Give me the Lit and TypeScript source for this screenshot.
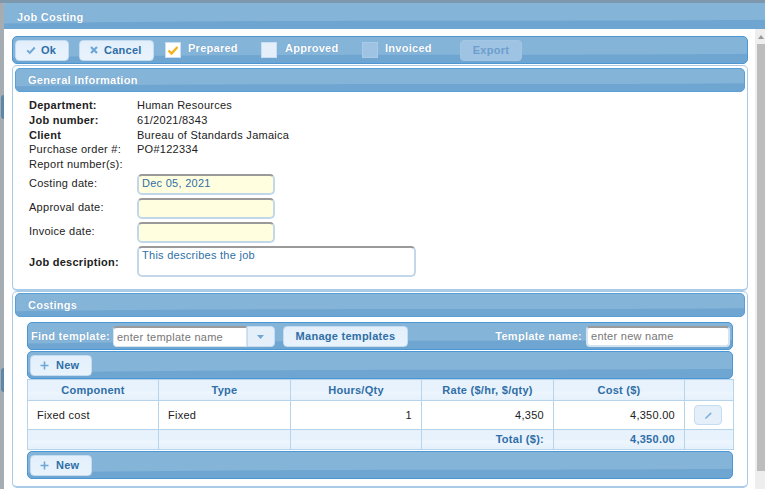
import { LitElement, html, css } from "lit";
import { customElement } from "lit/decorators.js";

const check = (c: string, w = 10) => html`<svg width=${w} height=${w} viewBox="0 0 12 12"><path d="M1.5 6.5 L4.5 9.5 L10.5 3" fill="none" stroke=${c} stroke-width="2.4"/></svg>`;
const cross = html`<svg width="8" height="8" viewBox="0 0 8 8"><path d="M1 1 L7 7 M7 1 L1 7" stroke="#6ea6d6" stroke-width="2.2"/></svg>`;
const plus = html`<svg width="9" height="9" viewBox="0 0 9 9"><path d="M4.5 0.5 V8.5 M0.5 4.5 H8.5" stroke="#6ea6d6" stroke-width="1.6"/></svg>`;
const caret = html`<svg width="9" height="6" viewBox="0 0 9 6"><path d="M1 1 H8 L4.5 5 Z" fill="#6ea6d6"/></svg>`;
const pencil = html`<svg width="11" height="11" viewBox="0 0 11 11"><path d="M2 9 L2.4 7.4 L7.6 2.2 L8.8 3.4 L3.6 8.6 Z" fill="#7fb3de"/></svg>`;

@customElement("app-root")
export class AppRoot extends LitElement {
  static styles = css`
    :host { display: block; width: 765px; height: 489px; overflow: hidden; position: relative;
      font: 11px/15px "Liberation Sans", Arial, sans-serif; color: #222; letter-spacing: 0.27px;
      background: #a8a8a8; }
    * { box-sizing: border-box; }
    .page { display: flex; height: 489px; padding-top: 3px;
      background: linear-gradient(#7d97ad 0, #7d97ad 3px, #a6adb2 3px, #a6adb2 100%); }
    .strip { width: 4px; flex: none; position: relative; }
    .blob { position: absolute; left: 1px; width: 3px; background: #5d87a8; border-radius: 3px 0 0 3px; }
    .dialog { flex: 1; display: flex; flex-direction: column; min-width: 0; background: #fff; border-radius: 4px 0 0 0; overflow: hidden; }
    .wave {
      background-color: #6fa6d1;
      background-image: url("data:image/svg+xml,%3Csvg xmlns='http://www.w3.org/2000/svg' viewBox='0 0 700 28' preserveAspectRatio='none'%3E%3Cpath d='M0 22 C120 20 260 19 420 19 C520 19 620 19 700 18 V0 H0 Z' fill='%2385b4d9'/%3E%3C/svg%3E");
      background-size: 100% 100%;
    }
    .title { height: 26px; flex: none; display: flex; align-items: center; padding: 2px 0 0 13px; color: #fff; font-weight: bold; text-shadow: 0 0 1px #5b8fba; }
    .main { flex: 1; display: flex; min-height: 0; }
    .content { flex: 1; min-width: 0; padding: 7px 7px 0 8px; display: flex; flex-direction: column; }
    .scroll { width: 10px; flex: none; background: #eee; display: flex; flex-direction: column; align-items: flex-end; }
    .arrow { width: 8px; height: 15px; display: flex; align-items: center; justify-content: center; }
    .arrow i { border: 3.5px solid transparent; border-top: 0; border-bottom: 4px solid #999; }
    .thumb { width: 8px; height: 427px; background: #bdbdbd; }
    .bar { display: flex; align-items: center; border: 1px solid #4b97d6; border-radius: 5px; flex: none; }
    .toolbar { height: 28px; padding-left: 2px; }
    .btn { display: inline-flex; align-items: center; justify-content: center; height: 21px; flex: none;
      background: linear-gradient(#e2effb, #e9f3fc); border: 1px solid #c4dcf1; border-radius: 4px; color: #2f6ea6; font-weight: bold; }
    .ok { width: 54px; justify-content: flex-start; padding-left: 10px; gap: 5px; }
    .cancel { width: 75px; margin-left: 10px; justify-content: flex-start; padding-left: 10px; gap: 6px; }
    .export { width: 62px; background: #9fc3e3; border-color: #a3c6e5; color: #6d9fcd; }
    .cb { width: 16px; height: 16px; flex: none; background: #e4effa; border: 1px solid #c9def2; display: flex; align-items: center; justify-content: center; }
    .cb.on { background: #fff; margin-left: 11px; }
    .cb.dim { background: #9fc3e3; border-color: #a9cbe8; }
    .cl { color: #fff; font-weight: bold; margin-top: -4px; text-shadow: 0 0 1px #5b8fba; }
    .panel { border: 1px solid #a9cbe8; border-bottom-width: 2px; border-radius: 5px; background: #fff; flex: none; }
    .p1 { height: 226px; margin-top: 1px; padding: 2px; }
    .p2 { height: 197px; padding: 1px 2px 0; }
    .phead { height: 24px; color: #fff; font-weight: bold; padding-left: 12px; border: 1px solid #5aa0d8; border-radius: 5px; display: flex; align-items: center; text-shadow: 0 0 1px #5b8fba; }
    .form { padding: 6px 0 0 14px; display: grid; grid-template-columns: 108px 1fr; align-items: center; }
    .form .t { height: 14.8px; line-height: 15px; white-space: nowrap; }
    .b { font-weight: bold; }
    .in { background: #ffffe0; width: 138px; height: 21px; margin-bottom: 3px; border: 2px solid #c2d8ea; border-top-color: #9a9a9a; border-radius: 5px; padding: 0 3px; color: #2f6ea6; }
    .lbl { margin-bottom: 3px; margin-top: -2px; }
    .first { margin-top: 2px; }
    .lbl.first { margin-top: 0; }
    .ta { background: #fff; width: 279px; height: 31px; }
    .inner { padding: 5px 12px 0 12px; }
    .find { height: 28px; padding: 1px 0 0 3px; }
    .fl { color: #fff; font-weight: bold; text-shadow: 0 0 1px #5b8fba; white-space: nowrap; }
    .combo { display: flex; height: 21px; margin-left: 3px; }
    .tin { background: #fff; border: 1px solid #d5e4f1; border-top: 2px solid #9a9a9a; border-radius: 4px 0 0 4px; color: #777; padding: 0 3px; display: flex; align-items: center; white-space: nowrap; }
    .t1 { width: 134px; }
    .drop { width: 28px; background: #e4effa; border: 1px solid #c4dcf1; border-radius: 0 4px 4px 0; display: flex; align-items: center; justify-content: center; }
    .manage { width: 125px; margin-left: 8px; }
    .sp { flex: 1; }
    .t2 { width: 144px; margin: 0 2px 0 4px; border-radius: 4px; border: 2px solid #d5e4f1; border-top-color: #9a9a9a; }
    .newbar { height: 28px; padding-left: 2px; margin-top: 1px; }
    .newbar.last { height: 28px; margin-top: 0; }
    .new { width: 62px; justify-content: flex-start; padding-left: 9px; gap: 7px; }
    table { border-collapse: collapse; table-layout: fixed; width: 706px; margin: 0 0 1px; }
    td, th { border: 1px solid #b6d4ec; padding: 0 9px; }
    thead th, tfoot td { background: linear-gradient(#e7f2fc 0, #e7f2fc 55%, #eef6fd 55%, #e4f0fb 100%); color: #2f6ea6; font-weight: bold; }
    thead tr { height: 21px; }
    tbody tr { height: 29px; }
    tfoot tr { height: 20px; }
    th { text-align: center; }
    .r { text-align: right; }
    .edit { width: 28px; height: 20px; display: flex; align-items: center; justify-content: center; margin: 0 0 0 9px; background: #e4effa; border: 1px solid #c4dcf1; border-radius: 4px; }
    .pc { padding: 0; }
  `;

  render() {
    return html`
      <div class="page">
        <div class="strip">
          <div class="blob" style="top:92px;height:24px"></div>
          <div class="blob" style="top:365px;height:24px"></div>
        </div>
        <div class="dialog">
          <div class="title wave">Job Costing</div>
          <div class="main">
            <div class="content">
              <div class="bar wave toolbar">
                <span class="btn ok">${check("#6ea6d6")}Ok</span>
                <span class="btn cancel">${cross}Cancel</span>
                <span class="cb on">${check("#f5b21b", 12)}</span>
                <span class="cl" style="margin-left:7px;width:73px">Prepared</span>
                <span class="cb"></span>
                <span class="cl" style="margin-left:8px;width:77px">Approved</span>
                <span class="cb dim"></span>
                <span class="cl" style="margin-left:7px;width:75px">Invoiced</span>
                <span class="btn export">Export</span>
              </div>
              <div class="panel p1">
                <div class="phead wave">General Information</div>
                <div class="form">
                  <div class="t b">Department:</div><div class="t">Human Resources</div>
                  <div class="t b">Job number:</div><div class="t">61/2021/8343</div>
                  <div class="t b">Client</div><div class="t">Bureau of Standards Jamaica</div>
                  <div class="t">Purchase order #:</div><div class="t">PO#122334</div>
                  <div class="t">Report number(s):</div><div class="t"></div>
                  <div class="lbl first">Costing date:</div><div class="in first">Dec 05, 2021</div>
                  <div class="lbl">Approval date:</div><div class="in"></div>
                  <div class="lbl">Invoice date:</div><div class="in"></div>
                  <div class="b">Job description:</div><div class="in ta">This describes the job</div>
                </div>
              </div>
              <div class="panel p2">
                <div class="phead wave">Costings</div>
                <div class="inner">
                  <div class="bar wave find">
                    <span class="fl">Find template:</span>
                    <div class="combo"><div class="tin t1">enter template name</div><div class="drop">${caret}</div></div>
                    <span class="btn manage">Manage templates</span>
                    <span class="sp"></span>
                    <span class="fl">Template name:</span>
                    <div class="combo" style="margin:0"><div class="tin t2">enter new name</div></div>
                  </div>
                  <div class="bar wave newbar"><span class="btn new">${plus}New</span></div>
                  <table>
                    <colgroup><col style="width:131px"><col style="width:132px"><col style="width:131px"><col style="width:132px"><col style="width:131px"><col style="width:49px"></colgroup>
                    <thead><tr><th>Component</th><th>Type</th><th>Hours/Qty</th><th>Rate ($/hr, $/qty)</th><th>Cost ($)</th><th></th></tr></thead>
                    <tbody><tr><td>Fixed cost</td><td>Fixed</td><td class="r">1</td><td class="r">4,350</td><td class="r">4,350.00</td><td class="pc"><span class="edit">${pencil}</span></td></tr></tbody>
                    <tfoot><tr><td></td><td></td><td></td><td class="r">Total ($):</td><td class="r">4,350.00</td><td></td></tr></tfoot>
                  </table>
                  <div class="bar wave newbar last"><span class="btn new">${plus}New</span></div>
                </div>
              </div>
            </div>
            <div class="scroll">
              <div class="arrow"><i></i></div>
              <div class="thumb"></div>
            </div>
          </div>
        </div>
      </div>
    `;
  }
}
